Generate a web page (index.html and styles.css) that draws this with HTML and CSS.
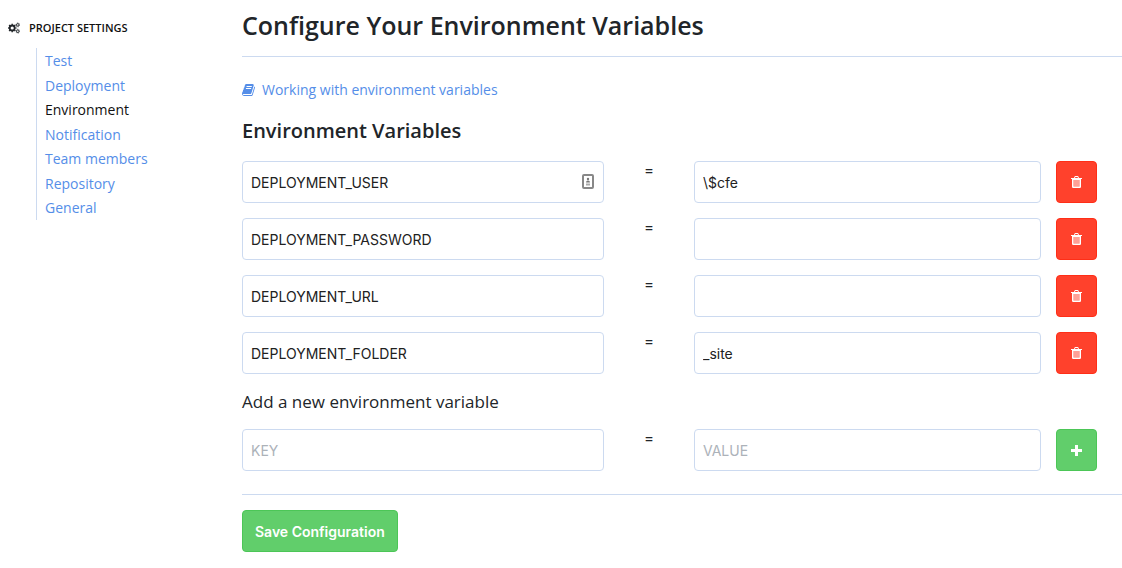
FILE: index.html
```html
<!DOCTYPE html>
<html lang="en">
<head>
<meta charset="utf-8">
<meta name="viewport" content="width=device-width, initial-scale=1">
<title>Configure Your Environment Variables</title>
<link rel="stylesheet" href="styles.css">
</head>
<body>
<svg class="defs" aria-hidden="true">
  <symbol id="trash" viewBox="0 0 11 12">
    <path fill="#fff" fill-rule="evenodd" d="M3 2 3.600.5Q3.800 0 4.400 0h2.200Q7.200 0 7.400.5L8 2h3v1h-1v7.700Q10 12 8.800 12H2.200Q1 12 1 10.700V3H0V2zM4 2h3L6.600.9H4.400zM2.500 4v6.500h6V4z"/>
    <path fill="#fff" fill-opacity=".5" d="M2.500 4h6v6.500h-6z"/>
  </symbol>
</svg>
<div class="page">
  <aside class="sidebar">
    <div class="sidebar-title">
      <svg class="cogs" viewBox="0 0 12 12" fill="none" stroke="#212529" aria-hidden="true">
        <circle cx="4.200" cy="6" r="2.500" stroke-width="1.800"/>
        <circle cx="4.200" cy="6" r="3.700" stroke-width="1.200" pathLength="16" stroke-dasharray="1 1" stroke-dashoffset=".5"/>
        <circle cx="9.800" cy="2.900" r="1.300" stroke-width="1"/>
        <circle cx="9.800" cy="2.900" r="2" stroke-width=".6" pathLength="12" stroke-dasharray="1 1"/>
        <circle cx="9.800" cy="9.200" r="1.300" stroke-width="1"/>
        <circle cx="9.800" cy="9.200" r="2" stroke-width=".6" pathLength="12" stroke-dasharray="1 1"/>
      </svg>
      <span>PROJECT SETTINGS</span>
    </div>
    <nav class="menu">
      <a href="#">Test</a>
      <a href="#">Deployment</a>
      <a href="#" class="active" aria-current="page">Environment</a>
      <a href="#">Notification</a>
      <a href="#">Team members</a>
      <a href="#">Repository</a>
      <a href="#">General</a>
    </nav>
  </aside>
  <main class="content">
    <h1 class="title">Configure Your Environment Variables</h1>
    <a class="help" href="#">
      <svg class="book" viewBox="64 128 1664 1536" fill="currentColor" aria-hidden="true"><path d="M1703 478q40 57 18 129l-275 906q-19 64-76.500 107.500t-122.500 43.500h-923q-77 0-148.500-53.500t-99.500-131.500q-24-67-2-127 0-4 3-27t4-37q1-8-3-21.500t-3-19.500q2-11 8-21t16.500-23.500 16.500-23.500q23-38 45-91.500t30-91.500q3-10 .5-30t-.5-28q3-11 17-28t17-23q21-36 42-92t25-90q1-9-2.500-32t.5-28q4-13 22-30.500t22-22.500q19-26 42.500-84.500t27.500-96.500q1-8-3-25.500t-2-26.500q2-8 9-18t18-23 17-21q8-12 16.500-30.500t15-35 16-36 19.500-32 26.500-23.500 36-11.500 47.500 5.500l-1 3q38-9 51-9h761q74 0 114 56t18 130l-274 906q-36 119-71.500 153.500t-128.500 34.500h-869q-27 0-38 15-11 16-1 43 24 70 144 70h923q29 0 56-15.500t35-41.500l300-987q7-22 5-57 38 15 59 43zm-1064 2q-4 13 2 22.500t20 9.500h608q13 0 25.500-9.500t16.500-22.500l21-64q4-13-2-22.500t-20-9.500h-608q-13 0-25.500 9.500t-16.500 22.500zm-83 256q-4 13 2 22.500t20 9.500h608q13 0 25.500-9.500t16.500-22.500l21-64q4-13-2-22.500t-20-9.500h-608q-13 0-25.500 9.500t-16.500 22.500z"/></svg>
      <span>Working with environment variables</span>
    </a>
    <form class="form">
      <h2 class="subtitle">Environment Variables</h2>
      <div class="rows">
        <div class="row">
          <div class="field">
            <input type="text" aria-label="Key 1" value="DEPLOYMENT_USER">
            <svg class="autofill" viewBox="0 0 12 15" aria-hidden="true">
              <rect x="1" y="1" width="10" height="13" rx="1" fill="#fff" stroke="#888" stroke-width="2"/>
              <circle cx="6" cy="5" r="1.200" fill="#777"/>
              <path d="M4 8.500Q4 6.500 6 6.500T8 8.500z" fill="#777"/>
              <path d="M4 10.500h4" stroke="#aaa" stroke-width="2"/>
            </svg>
          </div>
          <span class="equals">=</span>
          <input type="text" aria-label="Value 1" value="\$cfe">
          <button type="button" class="btn remove" aria-label="Delete variable 1"><svg class="trash"><use href="#trash"/></svg></button>
        </div>
        <div class="row">
          <input type="text" aria-label="Key 2" value="DEPLOYMENT_PASSWORD">
          <span class="equals">=</span>
          <input type="text" aria-label="Value 2">
          <button type="button" class="btn remove" aria-label="Delete variable 2"><svg class="trash"><use href="#trash"/></svg></button>
        </div>
        <div class="row">
          <input type="text" aria-label="Key 3" value="DEPLOYMENT_URL">
          <span class="equals">=</span>
          <input type="text" aria-label="Value 3">
          <button type="button" class="btn remove" aria-label="Delete variable 3"><svg class="trash"><use href="#trash"/></svg></button>
        </div>
        <div class="row">
          <input type="text" aria-label="Key 4" value="DEPLOYMENT_FOLDER">
          <span class="equals">=</span>
          <input type="text" aria-label="Value 4" value="_site">
          <button type="button" class="btn remove" aria-label="Delete variable 4"><svg class="trash"><use href="#trash"/></svg></button>
        </div>
      </div>
      <h3 class="add-title">Add a new environment variable</h3>
      <div class="row">
        <input type="text" aria-label="New key" placeholder="KEY">
        <span class="equals">=</span>
        <input type="text" aria-label="New value" placeholder="VALUE">
        <button type="button" class="btn add" aria-label="Add variable"><svg class="plus" viewBox="0 0 11 11" aria-hidden="true"><path d="M5.500 0v11M0 5.500h11" stroke="#fff" stroke-width="3"/></svg></button>
      </div>
      <div class="actions">
        <button type="submit" class="btn save">Save Configuration</button>
      </div>
    </form>
  </main>
</div>
</body>
</html>
```
FILE: styles.css
```css
* {
  box-sizing: border-box;
}

body {
  margin: 0;
  background: #fff;
  color: #212529;
  font: 14px/24px "Open Sans", sans-serif;
}

a {
  color: #558ee8;
  text-decoration: none;
}

.defs {
  display: none;
}

.page {
  display: grid;
  grid-template-columns: 234px minmax(0, 1fr);
  padding-left: 8px;
}

.sidebar {
  padding-top: 16px;
}

.sidebar-title {
  display: flex;
  align-items: center;
  gap: 9px;
  font-size: 11px;
  font-weight: 600;
  color: #111;
}

.cogs {
  width: 12px;
  height: 12px;
}

.menu {
  display: flex;
  flex-direction: column;
  justify-content: space-between;
  min-height: 172px;
  margin: 8px 0 0 28px;
  padding: 1px 0 0 8px;
  border-left: 1px solid #ccdaf0;
}

.menu .active {
  color: #111;
}

.title {
  margin: 0 0 21px;
  padding: 7px 0 13px;
  border-bottom: 1px solid #ccdaf0;
  font-size: 25px;
  font-weight: 600;
  line-height: 36px;
}

.help {
  display: flex;
  align-items: center;
  gap: 7px;
}

.book {
  width: 13px;
  height: 12px;
}

.subtitle {
  margin: 14px 0 15px;
  font-size: 20px;
  font-weight: 600;
  line-height: 30px;
}

.rows {
  display: grid;
  gap: 15px;
}

.row {
  display: grid;
  grid-template-columns: 362fr 90px 347fr 56px;
  padding-right: 25px;
}

.field {
  position: relative;
}

input {
  width: 100%;
  height: 42px;
  padding: 1px 8px;
  border: 1px solid #ccdaf0;
  border-radius: 4px;
  background: #fff;
  color: #212121;
  font: 14px Inter, sans-serif;
}

input::placeholder {
  color: #acb2b9;
  opacity: 1;
}

.autofill {
  position: absolute;
  top: 13px;
  right: 10px;
  width: 12px;
  height: 15px;
}

.equals {
  font-weight: 600;
  line-height: 20px;
  text-align: center;
}

.btn {
  display: flex;
  align-items: center;
  justify-content: center;
  height: 42px;
  border: 1px solid;
  border-radius: 4px;
  color: #fff;
}

.remove,
.add {
  width: 41px;
  padding: 0;
  justify-self: end;
}

.remove {
  background: #ff412c;
  border-color: #ff2e17;
}

.add,
.save {
  background: #61ce6b;
  border-color: #4cc657;
}

.trash {
  width: 11px;
  height: 12px;
}

.plus {
  width: 11px;
  height: 11px;
}

.add-title {
  margin: 15px 0;
  font-size: 17px;
  font-weight: 400;
  line-height: 25px;
}

.actions {
  margin-top: 23px;
  padding: 15px 0;
  border-top: 1px solid #ccdaf0;
}

.save {
  padding: 0 12px;
  font: 600 14px Inter, sans-serif;
}
```
